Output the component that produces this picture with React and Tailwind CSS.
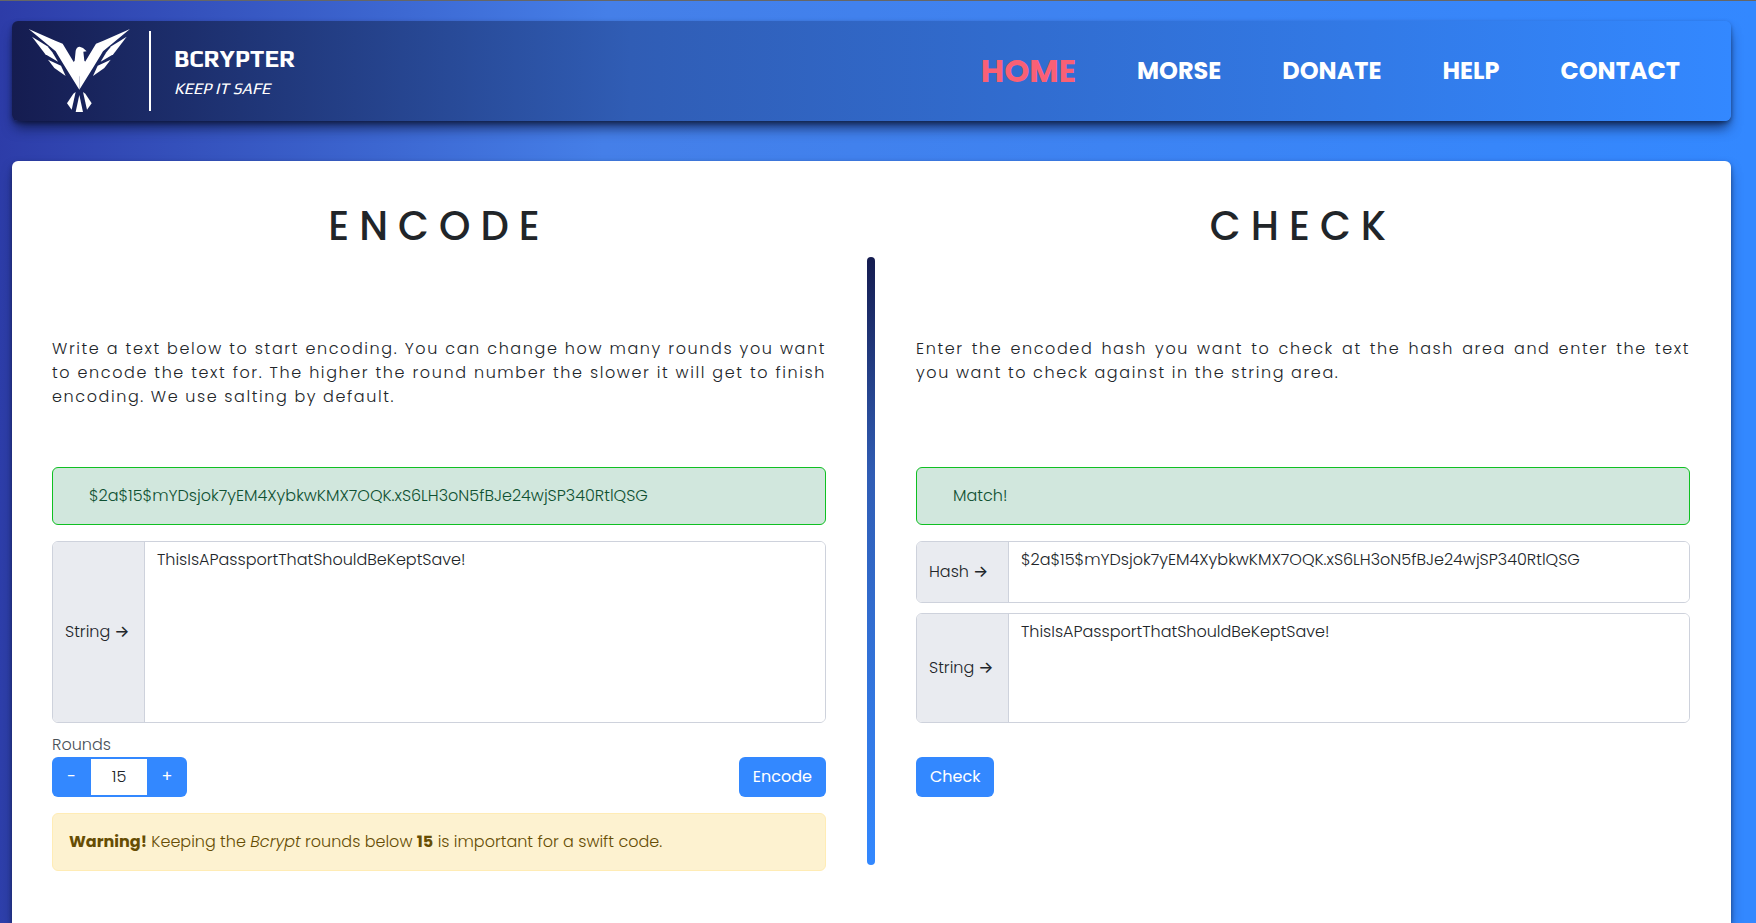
import React, { useState } from "react";

const NAV = ["Morse", "Donate", "Help", "Contact"];
const HASH = "$2a$15$mYDsjok7yEM4XybkwKMX7OQK.xS6LH3oN5fBJe24wjSP340RtlQSG";
const SECRET = "ThisIsAPassportThatShouldBeKeptSave!";

function Wing() {
  return (
    <>
      <path d="M26 27 L106 62 L128 71 L161 126 L178 150 V209 L136 142 L114 106 L107 94 Z" />
      <path d="M36 50 L82 79 L97 97 L114 125 L76 103 Z" />
      <path d="M84 119 L123 137 L137 168 L103 144 Z" />
      <path d="M167 216 L160 221 L141 250 L155 269 Z" />
    </>
  );
}

function Logo() {
  return (
    <svg viewBox="0 3 360 300" className="h-[100px] w-[120px] shrink-0" fill="#fff" aria-hidden="true">
      <Wing />
      <g transform="translate(356 0) scale(-1 1)">
        <Wing />
      </g>
      <path d="M159 128 L164 122 L167 92 Q170 80 179 80 L189 84 L200 94 L190 95 L193 122 L199 128 L179 170 Z" />
      <path d="M178 225 L167 276 H189 Z" />
    </svg>
  );
}

function Field({ id, label, value, onChange, className }) {
  return (
    <div className={"flex overflow-hidden rounded-md border border-[#ced2dc] " + className}>
      <label htmlFor={id} className="flex w-[92px] shrink-0 items-center gap-1 whitespace-nowrap border-r border-[#ced2dc] bg-[#e9ebf0] pl-3">
        {label} <span className="font-medium">→</span>
      </label>
      <textarea
        id={id}
        value={value}
        onChange={(e) => onChange(e.target.value)}
        className="min-w-0 flex-1 resize-none bg-white px-3 py-1.5 outline-none"
      />
    </div>
  );
}

function Column({ title, text, result, children }) {
  return (
    <section className="min-w-0 flex-1">
      <h2 className="pt-[41px] text-center text-[40px] font-medium leading-12 tracking-[10px]">{title}</h2>
      <p className="mt-[87px] h-[72px] text-justify tracking-widest">{text}</p>
      <output className="mt-[58px] block rounded-md border border-[#0fc022] bg-[#d1e7dd] py-4 pl-9 pr-4 text-[#0f5132]">
        {result}
      </output>
      {children}
    </section>
  );
}

const BUTTON = "h-10 rounded-md bg-[#3388ff] px-3.5 font-normal text-white";

export default function App() {
  const [text, setText] = useState(SECRET);
  const [hash, setHash] = useState(HASH);
  const [candidate, setCandidate] = useState(SECRET);
  const [rounds, setRounds] = useState(15);

  return (
    <div className="flex min-h-screen flex-col border-t border-[#666] bg-[linear-gradient(92deg,#2d3ca8_0%,#457fe8_34%,#3388ff_98%)] pl-3 pr-[25px] pt-5 font-['Poppins','Inter',sans-serif] text-base font-light leading-6 text-[#212529]">
      <header className="flex h-[100px] items-center rounded-md bg-[linear-gradient(90deg,#151c50_0%,#305db5_36%,#3388ff_100%)] pl-2 pr-[51px] text-white shadow-[0_2px_4px_rgba(0,0,0,0.35),0_9px_13px_-3px_rgba(10,20,60,0.8)]">
        <Logo />
        <div className="ml-[9px] h-20 w-0.5 bg-white" />
        <div className="ml-[23px] pt-1 font-['Play','Noto_Sans',sans-serif]">
          <h1 className="text-2xl font-bold leading-8">BCRYPTER</h1>
          <p className="text-base font-normal italic leading-7">KEEP IT SAFE</p>
        </div>
        <nav className="ml-auto flex items-center gap-[61px] text-2xl font-bold uppercase">
          <a href="#home" className="text-[32px] text-[#fa6075]">Home</a>
          {NAV.map((item) => (
            <a key={item} href={"#" + item.toLowerCase()}>{item}</a>
          ))}
        </nav>
      </header>

      <main className="mt-10 flex flex-1 rounded-t-md bg-white pb-10 pl-10 pr-[41px] shadow-[0_2px_4px_rgba(0,0,0,0.35),0_7px_13px_-3px_rgba(10,20,60,0.7)]">
        <Column
          title="ENCODE"
          text="Write a text below to start encoding. You can change how many rounds you want to encode the text for. The higher the round number the slower it will get to finish encoding. We use salting by default."
          result={HASH}
        >
          <Field id="text" label="String" value={text} onChange={setText} className="mt-4 h-[182px]" />
          <div className="mt-2.5 flex items-end justify-between">
            <div>
              <label htmlFor="rounds" className="block text-[#495057]">Rounds</label>
              <div className="flex h-10 overflow-hidden rounded-md bg-[#3388ff] text-white">
                <button type="button" aria-label="Fewer rounds" className="w-[39px] font-normal" onClick={() => setRounds(rounds - 1)}>-</button>
                <input
                  id="rounds"
                  value={rounds}
                  onChange={(e) => setRounds(Number(e.target.value) || 0)}
                  className="my-0.5 w-14 bg-white text-center text-[#212529] outline-none"
                />
                <button type="button" aria-label="More rounds" className="w-10 font-normal" onClick={() => setRounds(rounds + 1)}>+</button>
              </div>
            </div>
            <button type="button" className={BUTTON}>Encode</button>
          </div>
          <div role="alert" className="mt-4 rounded-md border border-[#ffecb5] bg-[#fdf2d0] p-4 text-[#664d03]">
            <strong className="font-bold">Warning!</strong> Keeping the <em>Bcrypt</em> rounds below{" "}
            <strong className="font-bold">15</strong> is important for a swift code.
          </div>
        </Column>

        <div className="mx-[41px] mt-24 h-[608px] w-2 shrink-0 rounded-full bg-[linear-gradient(180deg,#151c50_0%,#305db5_36%,#3388ff_100%)]" />

        <Column
          title="CHECK"
          text="Enter the encoded hash you want to check at the hash area and enter the text you want to check against in the string area."
          result="Match!"
        >
          <Field id="hash" label="Hash" value={hash} onChange={setHash} className="mt-4 h-[62px]" />
          <Field id="candidate" label="String" value={candidate} onChange={setCandidate} className="mt-2.5 h-[110px]" />
          <button type="button" className={"mt-[34px] " + BUTTON}>Check</button>
        </Column>
      </main>
    </div>
  );
}
